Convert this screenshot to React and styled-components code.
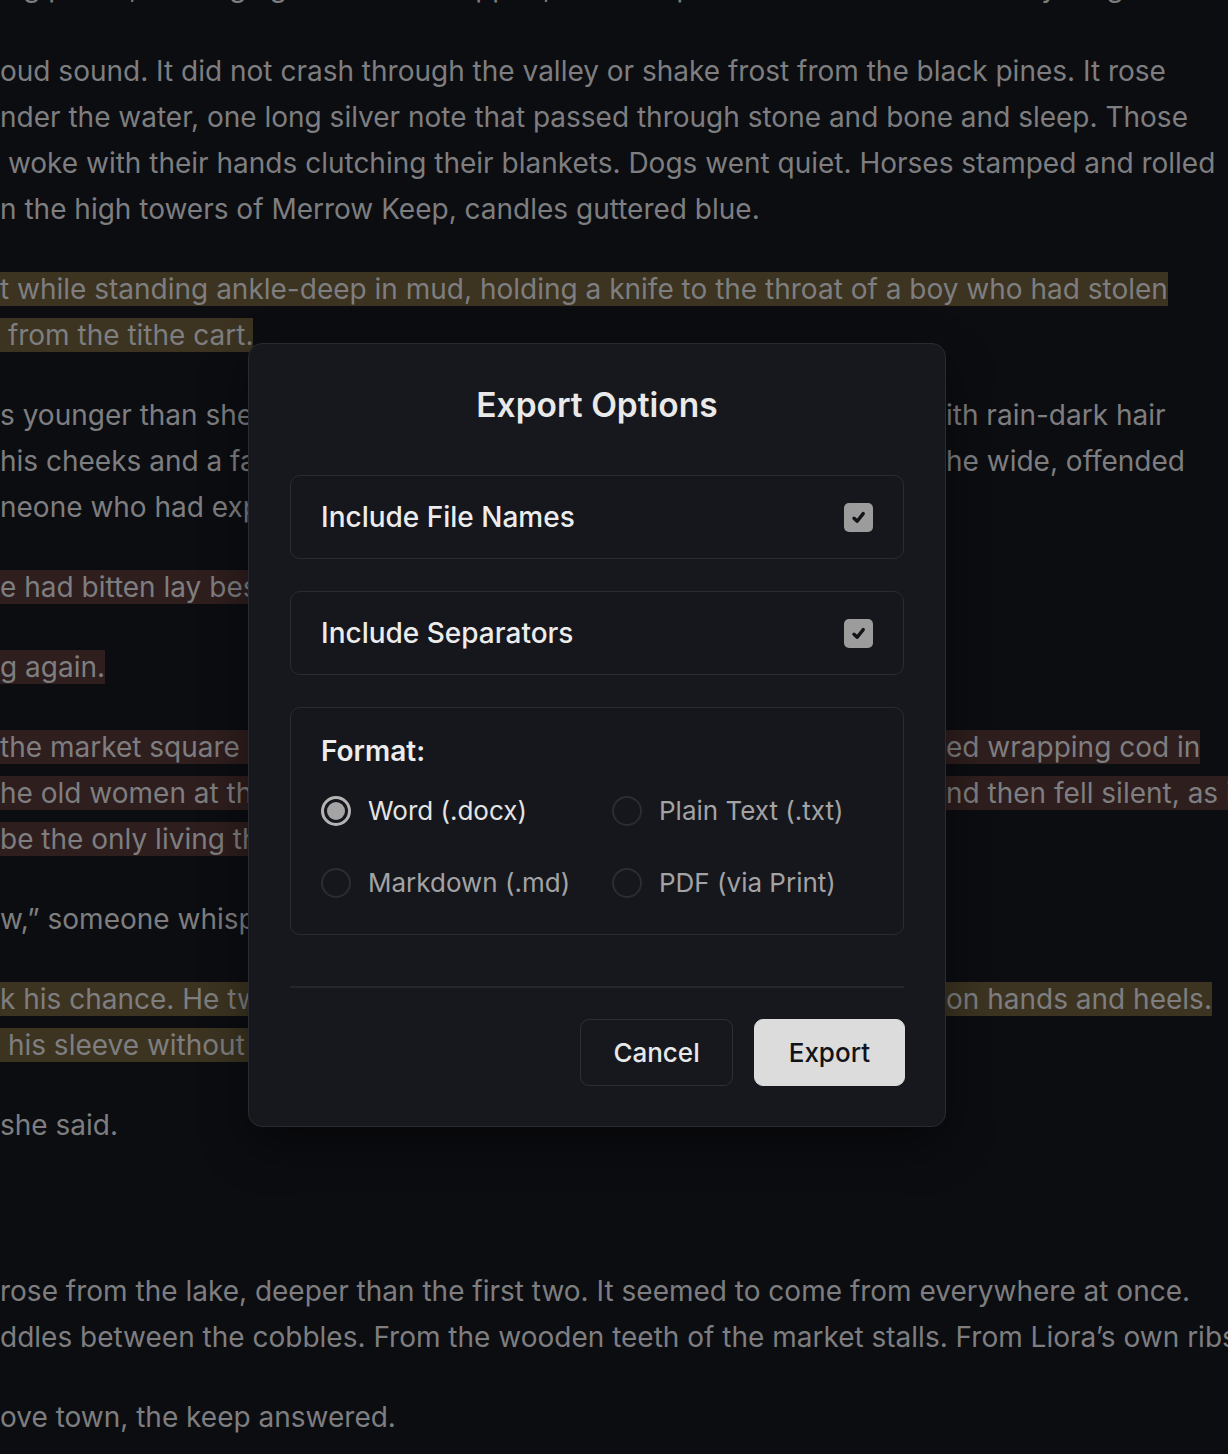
import styled, { createGlobalStyle } from 'styled-components'

const GlobalStyle = createGlobalStyle`
  html, body {
    margin: 0;
    padding: 0;
    background: #0c0d11;
  }
  body {
    font-family: Inter, 'Noto Sans', sans-serif;
    overflow: hidden;
  }
`

const HL = {
  gold: '#3c3421',
  rose: '#2f1e1e',
}

const paragraphs = [
  { lines: [{ text: 'ing pause, the ringing of the bell stopped, and the quiet that followed held everything.' }] },
  {
    lines: [
      { text: 'oud sound. It did not crash through the valley or shake frost from the black pines. It rose' },
      { text: 'nder the water, one long silver note that passed through stone and bone and sleep. Those' },
      { text: '\u00a0woke with their hands clutching their blankets. Dogs went quiet. Horses stamped and rolled' },
      { text: 'n the high towers of Merrow Keep, candles guttered blue.' },
    ],
  },
  {
    lines: [
      { text: 't while standing ankle-deep in mud, holding a knife to the throat of a boy who had stolen ', mark: 'gold' },
      { text: '\u00a0from the tithe cart.', mark: 'gold' },
    ],
  },
  {
    lines: [
      { left: 's younger than she had expected, a thin boy w', right: 'ith rain-dark hair' },
      { left: 'his cheeks and a face', right: 'he wide, offended' },
      { left: 'neone who had expected the world to be kinder.' },
    ],
  },
  { lines: [{ left: 'e had bitten lay beside him in the mud', mark: 'rose' }] },
  { lines: [{ text: 'g again.', mark: 'rose' }] },
  {
    lines: [
      { left: 'the market square came to a halt', mark: 'rose', right: 'ed wrapping cod in ', rightMark: 'rose' },
      { left: 'he old women at the well', mark: 'rose', right: 'nd then fell silent, as if they had', rightMark: 'rose' },
      { left: 'be the only living thing in the town', mark: 'rose' },
    ],
  },
  { lines: [{ left: 'w,\u201d someone whispered.' }] },
  {
    lines: [
      { left: 'k his chance. He twisted free', mark: 'gold', right: 'on hands and heels. ', rightMark: 'gold' },
      { left: '\u00a0his sleeve without a word', mark: 'gold' },
    ],
  },
  { lines: [{ text: 'she said.' }] },
  { spacer: true },
  {
    lines: [
      { text: 'rose from the lake, deeper than the first two. It seemed to come from everywhere at once.' },
      { text: 'ddles between the cobbles. From the wooden teeth of the market stalls. From Liora\u2019s own ribs.' },
    ],
  },
  { lines: [{ text: 'ove town, the keep answered.' }] },
]

const formats = [
  { id: 'docx', label: 'Word (.docx)' },
  { id: 'txt', label: 'Plain Text (.txt)' },
  { id: 'md', label: 'Markdown (.md)' },
  { id: 'pdf', label: 'PDF (via Print)' },
]

const CheckIcon = () => (
  <svg width='15' height='13' viewBox='0 0 15 13'>
    <path d='M3 7.2 L6.2 10.2 L12.2 2.6' fill='none' stroke='#131417' strokeWidth='3.4' strokeLinecap='round' strokeLinejoin='round' />
  </svg>
)

const DocLine = ({ line }) => {
  if (line.text !== undefined) {
    return (
      <Line>
        <Mark $tone={line.mark}>{line.text}</Mark>
      </Line>
    )
  }
  return (
    <SplitLine>
      <Cell>
        <Mark $tone={line.mark}>{line.left}</Mark>
      </Cell>
      <Cell />
      <Cell>{line.right && <Mark $tone={line.rightMark}>{line.right}</Mark>}</Cell>
    </SplitLine>
  )
}

export default function App() {
  const selected = 'docx'

  return (
    <>
      <GlobalStyle />
      <Page>
        <Document>
          {paragraphs.map((p, i) =>
            p.spacer ? (
              <SceneBreak key={i} />
            ) : (
              <Paragraph key={i}>
                {p.lines.map((line, j) => (
                  <DocLine key={j} line={line} />
                ))}
              </Paragraph>
            )
          )}
        </Document>

        <Dialog role='dialog' aria-labelledby='export-title'>
          <Title id='export-title'>Export Options</Title>

          <Options>
            <OptionCard as='label'>
              <OptionLabel>Include File Names</OptionLabel>
              <CheckBox>
                <CheckIcon />
              </CheckBox>
            </OptionCard>

            <OptionCard as='label'>
              <OptionLabel>Include Separators</OptionLabel>
              <CheckBox>
                <CheckIcon />
              </CheckBox>
            </OptionCard>

            <FormatCard>
              <FormatHeading>Format:</FormatHeading>
              <RadioGrid>
                {formats.map((f) => (
                  <RadioRow key={f.id}>
                    <Radio $checked={f.id === selected} />
                    <RadioLabel $checked={f.id === selected}>{f.label}</RadioLabel>
                  </RadioRow>
                ))}
              </RadioGrid>
            </FormatCard>
          </Options>

          <Divider />

          <Actions>
            <Button>Cancel</Button>
            <Button $primary>Export</Button>
          </Actions>
        </Dialog>
      </Page>
    </>
  )
}

const Page = styled.div`
  position: relative;
  width: 1228px;
  height: 1454px;
  overflow: hidden;
  background: #0c0d11;
`

const Document = styled.div`
  color: #7e7e80;
  font-size: 28px;
  line-height: 46px;
`

const Paragraph = styled.div`
  margin-bottom: 34px;

  &:first-child {
    margin-top: -36px;
    margin-bottom: 38px;
  }
`

const SceneBreak = styled.div`
  height: 86px;
`

const Line = styled.div`
  white-space: nowrap;
  overflow: hidden;
`

const SplitLine = styled.div`
  display: grid;
  grid-template-columns: 248px 698px 1fr;
  white-space: nowrap;
`

const Cell = styled.div`
  overflow: hidden;
`

const Mark = styled.span`
  background: ${(p) => (p.$tone ? HL[p.$tone] : 'transparent')};
`

const Dialog = styled.div`
  position: absolute;
  top: 343px;
  left: 248px;
  width: 698px;
  height: 784px;
  box-sizing: border-box;
  padding: 40px 41px 41px;
  display: flex;
  flex-direction: column;
  background: #17181d;
  border: 1px solid #2a2b31;
  border-radius: 14px;
  box-shadow: 0 18px 48px rgba(0, 0, 0, 0.45);
`

const Title = styled.h2`
  margin: 0 0 49px;
  text-align: center;
  color: #e9e9ea;
  font-size: 33.5px;
  line-height: 42px;
  font-weight: 600;
`

const Options = styled.div`
  display: flex;
  flex-direction: column;
  gap: 32px;
`

const OptionCard = styled.div`
  display: flex;
  align-items: center;
  justify-content: space-between;
  height: 84px;
  box-sizing: border-box;
  padding: 0 30px 0 30px;
  border: 1px solid #2b2c31;
  border-radius: 10px;
  background: #16171c;
`

const OptionLabel = styled.span`
  color: #ececec;
  font-size: 28px;
  font-weight: 500;
`

const CheckBox = styled.span`
  display: flex;
  align-items: center;
  justify-content: center;
  width: 29px;
  height: 29px;
  border-radius: 5px;
  background: #9c9c9d;
`

const FormatCard = styled.div`
  box-sizing: border-box;
  height: 228px;
  padding: 26px 30px 0;
  border: 1px solid #2b2c31;
  border-radius: 10px;
  background: #16171c;
`

const FormatHeading = styled.div`
  color: #ececec;
  font-size: 28px;
  line-height: 34px;
  font-weight: 600;
  margin-bottom: 26px;
`

const RadioGrid = styled.div`
  display: grid;
  grid-template-columns: 291px 1fr;
  row-gap: 38px;
`

const RadioRow = styled.div`
  display: flex;
  align-items: center;
  gap: 17px;
  height: 34px;
`

const Radio = styled.span`
  position: relative;
  width: 30px;
  height: 30px;
  box-sizing: border-box;
  border-radius: 50%;
  border: ${(p) => (p.$checked ? '3px solid #b4b4b5' : '2px solid #2c2d32')};

  &::after {
    content: '';
    display: ${(p) => (p.$checked ? 'block' : 'none')};
    position: absolute;
    inset: 3px;
    border-radius: 50%;
    background: #a4a4a5;
  }
`

const RadioLabel = styled.span`
  color: ${(p) => (p.$checked ? '#e4e4e5' : '#a3a3a5')};
  font-size: 26px;
  line-height: 34px;
`

const Divider = styled.hr`
  margin: 51px 0 31px;
  border: 0;
  border-top: 2px solid #26272c;
`

const Actions = styled.div`
  display: flex;
  justify-content: flex-end;
  gap: 21px;
  margin-right: -1px;
`

const Button = styled.button`
  height: 67px;
  padding: 0 ${(p) => (p.$primary ? '34px' : '32px')};
  border-radius: 9px;
  font-family: Inter, 'Noto Sans', sans-serif;
  font-size: 26px;
  font-weight: 500;
  cursor: pointer;
  color: ${(p) => (p.$primary ? '#121316' : '#e8e8e9')};
  background: ${(p) => (p.$primary ? '#dcdcdd' : '#17181d')};
  border: 1px solid ${(p) => (p.$primary ? '#dcdcdd' : '#2e2f35')};
`
